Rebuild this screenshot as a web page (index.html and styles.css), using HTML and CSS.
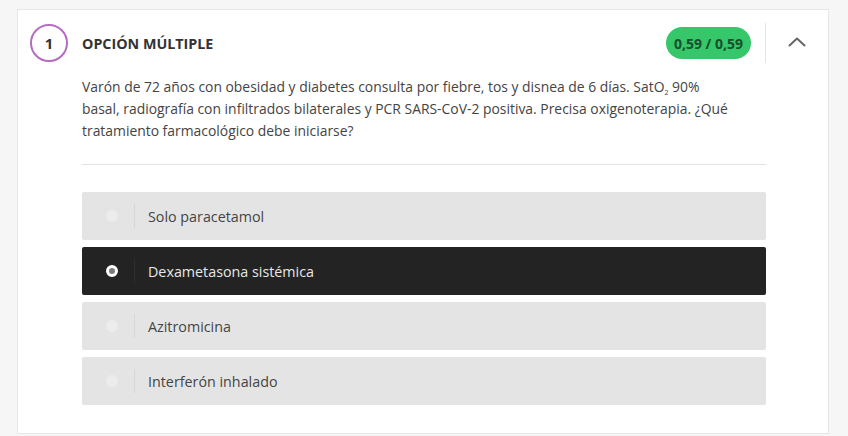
FILE: index.html
```html
<!DOCTYPE html>
<html lang="es">
<head>
<meta charset="utf-8">
<link rel="stylesheet" href="styles.css">
</head>
<body>
<div class="card">
  <div class="head">
    <div class="num">1</div>
    <div class="title">OPCIÓN MÚLTIPLE</div>
    <div class="badge">0,59 / 0,59</div>
    <div class="sep"></div>
    <div class="chev">
      <svg width="18" height="10" viewBox="0 0 18 10"><path d="M1.5 8.5 L9 1.5 L16.5 8.5" fill="none" stroke="#666" stroke-width="2" stroke-linecap="round" stroke-linejoin="round"/></svg>
    </div>
  </div>
  <div class="body">
    <p class="q">Varón de 72 años con obesidad y diabetes consulta por fiebre, tos y disnea de 6 días. SatO<sub>2</sub> 90%<br>basal, radiografía con infiltrados bilaterales y PCR SARS-CoV-2 positiva. Precisa oxigenoterapia. ¿Qué tratamiento farmacológico debe iniciarse?</p>
    <hr class="rule">
    <ul class="opts">
      <li class="opt"><span class="radio"></span><span class="bar"></span><span class="lbl">Solo paracetamol</span></li>
      <li class="opt sel"><span class="radio"></span><span class="bar"></span><span class="lbl">Dexametasona sistémica</span></li>
      <li class="opt"><span class="radio"></span><span class="bar"></span><span class="lbl">Azitromicina</span></li>
      <li class="opt"><span class="radio"></span><span class="bar"></span><span class="lbl">Interferón inhalado</span></li>
    </ul>
  </div>
</div>
</body>
</html>
```
FILE: styles.css
```css
* { box-sizing: border-box; }
body {
  margin: 0;
  background: #f6f6f6;
  font-family: "Open Sans", "Liberation Sans", sans-serif;
  color: #3a3a3a;
}
.card {
  margin: 9px 0 0 17px;
  width: 812px;
  height: 425px;
  background: #fff;
  border: 1px solid #e6e6e6;
  padding: 13px 0 0 12px;
}
.head {
  display: flex;
  align-items: center;
  height: 40px;
}
.num {
  width: 38px;
  height: 38px;
  border: 2px solid #b46cc0;
  border-radius: 50%;
  display: flex;
  align-items: center;
  justify-content: center;
  font-weight: 700;
  font-size: 15px;
  color: #333;
}
.title {
  margin-left: 14px;
  font-weight: 700;
  font-size: 14.3px;
  color: #333;
  flex: 1;
}
.badge {
  background: #35c76a;
  color: #17502b;
  font-weight: 700;
  font-size: 14px;
  height: 32px;
  padding: 0 8px;
  border-radius: 16px;
  display: flex;
  align-items: center;
}
.sep {
  width: 1px;
  height: 40px;
  background: #e3e3e3;
  margin-left: 14px;
}
.chev {
  width: 62px;
  display: flex;
  justify-content: center;
  padding-bottom: 2px;
}
.body {
  padding-left: 52px;
  width: 736px;
}
.q {
  margin: 13px 0 0;
  font-size: 13.9px;
  line-height: 22px;
  color: #444;
}
.q sub { font-size: 7px; line-height: 0; vertical-align: -3px; }
.rule {
  margin: 22px 0 0;
  border: 0;
  height: 1px;
  background: #e2e2e2;
}
.opts {
  list-style: none;
  margin: 27px 0 0;
  padding: 0;
  display: flex;
  flex-direction: column;
  gap: 7px;
}
.opt {
  height: 48px;
  background: #e4e4e4;
  border-radius: 2px;
  display: flex;
  align-items: center;
  padding-left: 24px;
  font-size: 14.3px;
  color: #444;
}
.radio {
  width: 12px;
  height: 12px;
  border-radius: 50%;
  background: #ececec;
}
.bar {
  width: 1px;
  height: 24px;
  background: #d6d6d6;
  margin-left: 16px;
}
.lbl { margin-left: 13px; }
.opt.sel { background: #232323; color: #e8e8e8; }
.opt.sel .radio {
  background: #7a7a7a;
  border: 3.5px solid #fff;
}
.opt.sel .bar { background: #2e2e2e; }
```
